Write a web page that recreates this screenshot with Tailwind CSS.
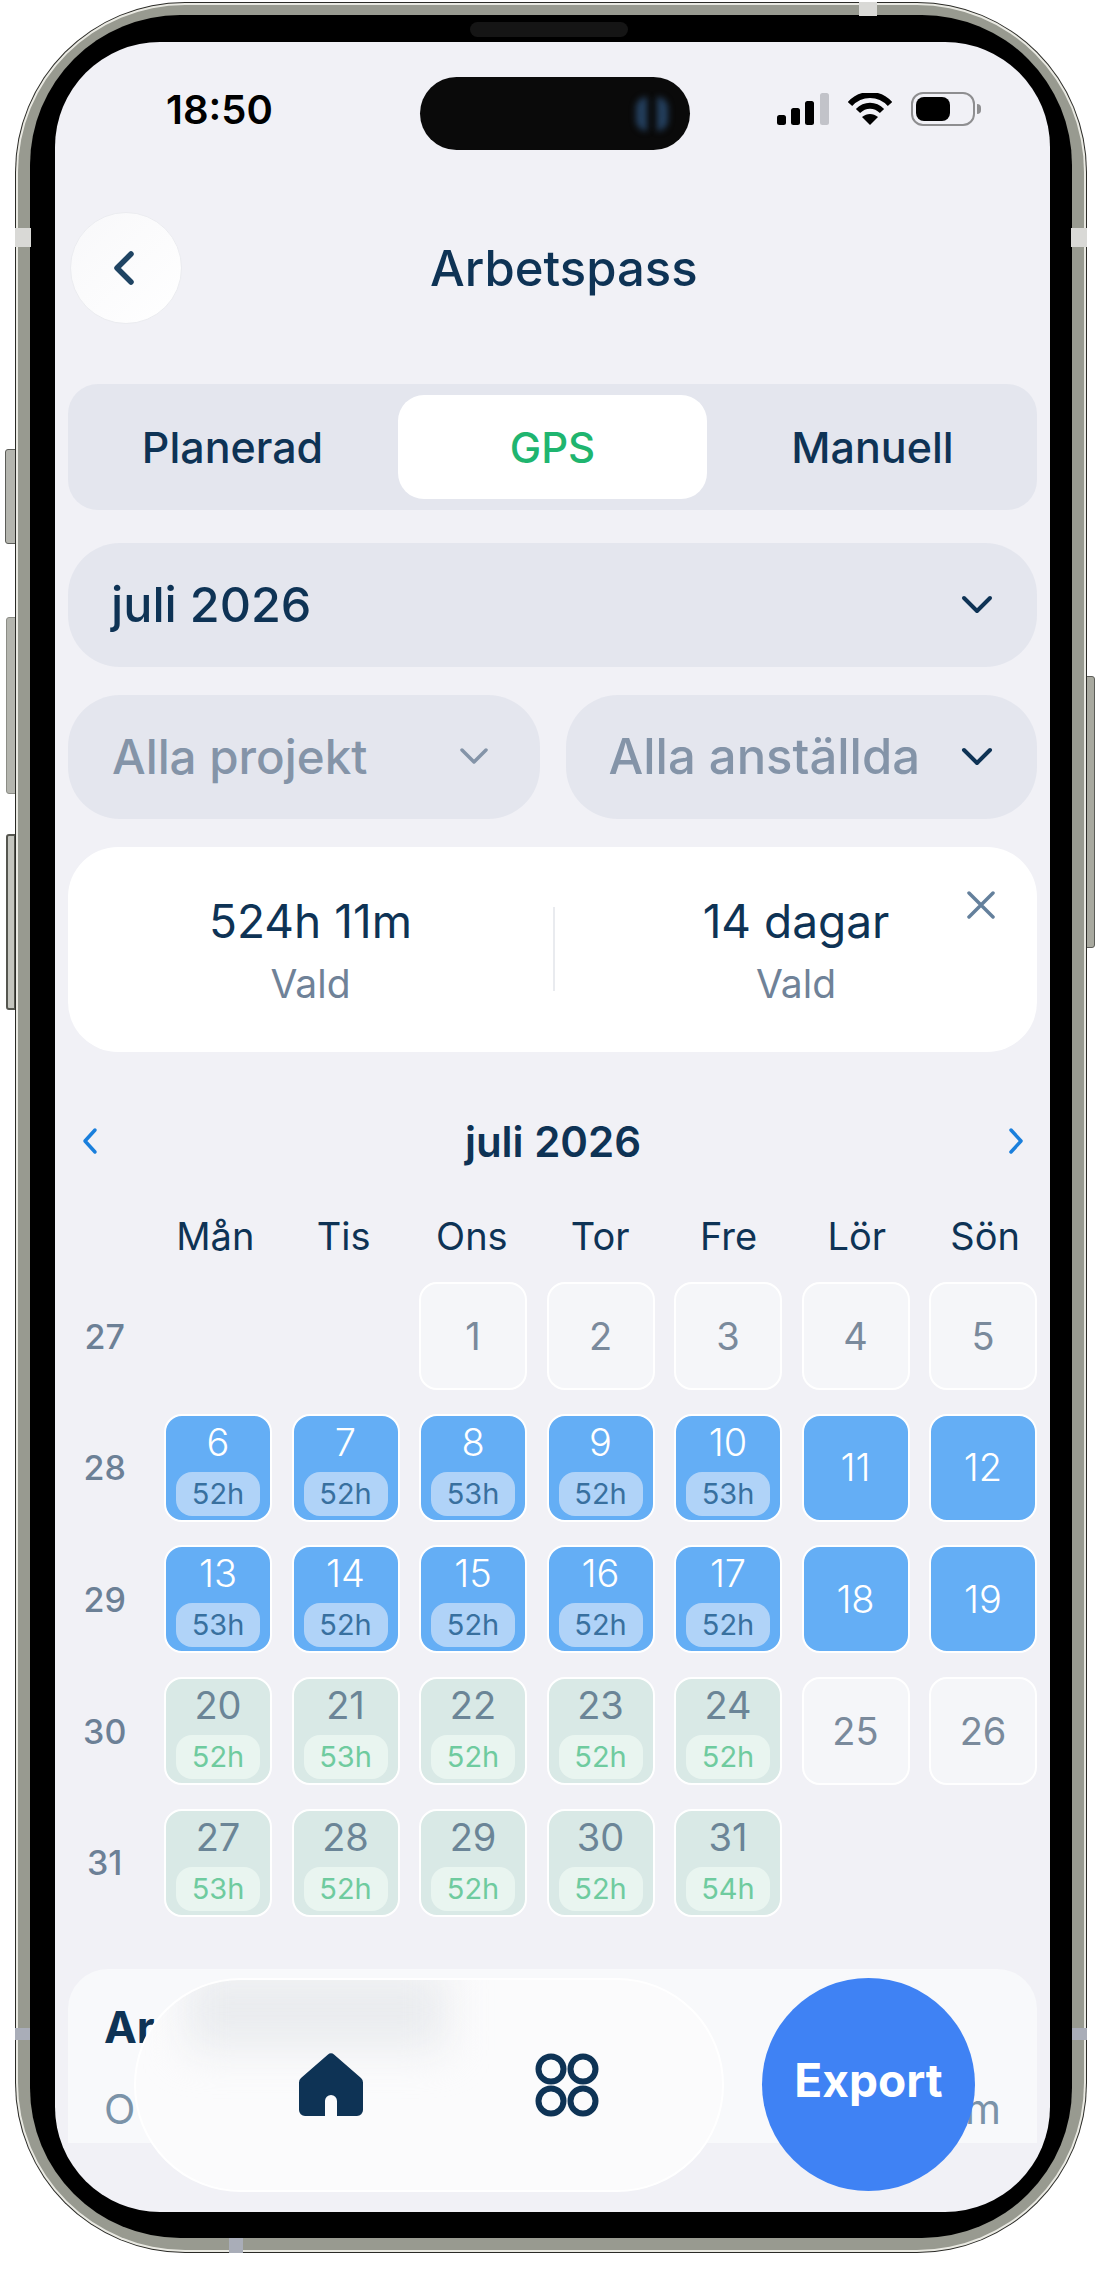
<!DOCTYPE html>
<html lang="sv">
<head>
    <meta charset="UTF-8">
    <title>Arbetspass</title>
    <script src="https://cdn.jsdelivr.net/npm/@tailwindcss/browser@4"></script>
</head>
<body class="bg-white">
    <div class="w-[1103px] h-[2269px] pt-[2px] pl-[15px] relative overflow-hidden font-['Inter',sans-serif]">
        <!-- side buttons -->
        <div class="absolute left-[5px] top-[449px] w-[11px] h-[95px] rounded-l-[3px] bg-[#b4b5ae] border border-[#5c5d58]"></div>
        <div class="absolute left-[6px] top-[617px] w-[10px] h-[177px] rounded-l-[3px] bg-[#b4b5ae] border border-[#8c8d86]"></div>
        <div class="absolute left-[6px] top-[834px] w-[10px] h-[176px] rounded-l-[3px] bg-[#c4c5be] border-2 border-[#55564f]"></div>
        <div class="absolute left-[1086px] top-[676px] w-[9px] h-[272px] rounded-r-[3px] bg-[#a8a99f] border border-[#5c5d58]"></div>

        <!-- phone frame -->
        <div class="w-[1072px] h-[2251px] rounded-[170px] bg-[#2b2b27] p-px relative">
            <div class="size-full rounded-[169px] bg-[#e9e9e2] p-[2px]">
                <div class="size-full rounded-[167px] bg-[#989a90] pt-[10px] px-[12px] pb-[12px]">
                    <div class="size-full rounded-[150px] bg-black pt-[27px] px-[25px] pb-[26px] relative">
                        <div class="absolute left-[440px] top-[7px] w-[158px] h-[15px] rounded-full bg-[#151515]"></div>

                        <!-- screen -->
                        <div class="w-[995px] h-[2170px] rounded-[105px] bg-[#f1f1f6] overflow-hidden relative">
                            <!-- status bar -->
                            <div class="h-[171px] relative">
                                <div class="absolute left-[111px] top-[41px] text-[40px] leading-[54px] font-semibold text-black">18:50</div>
                                <div class="absolute left-[365px] top-[35px] w-[270px] h-[73px] rounded-full bg-[#0a0a0a]">
                                    <div class="absolute left-[216px] top-[20px] w-[11px] h-[34px] rounded-l-full bg-[#24405f] blur-[3px]"></div>
                                    <div class="absolute left-[237px] top-[20px] w-[11px] h-[34px] rounded-r-full bg-[#24405f] blur-[3px]"></div>
                                </div>
                                <svg class="absolute left-[722px] top-[51px]" width="52" height="32" viewBox="0 0 52 32">
                                    <rect x="0" y="22" width="9" height="10" rx="2.5" fill="#000"/>
                                    <rect x="14" y="15" width="9" height="17" rx="2.5" fill="#000"/>
                                    <rect x="28" y="8" width="9" height="24" rx="2.5" fill="#000"/>
                                    <rect x="43" y="0" width="9" height="32" rx="2.5" fill="#c2c3c9"/>
                                </svg>
                                <svg class="absolute left-[793px] top-[51px]" width="44" height="32" viewBox="0 0 44 32">
                                    <path d="M2 11C13-1 31-1 42 11" fill="none" stroke="#000" stroke-width="6"/>
                                    <path d="M10 18c7-7 17-7 24 0" fill="none" stroke="#000" stroke-width="6"/>
                                    <path d="M22 32l-8-8c5-4 11-4 16 0z" fill="#000"/>
                                </svg>
                                <div class="absolute left-[856px] top-[50px] w-[64px] h-[34px] rounded-[12px] border-2 border-[#8e8e90] p-[3px]">
                                    <div class="w-[34px] h-full rounded-[8px] bg-black"></div>
                                </div>
                                <div class="absolute left-[922px] top-[62px] w-[4px] h-[10px] rounded-r-full bg-[#8e8e90]"></div>
                            </div>

                            <!-- header -->
                            <div class="h-[110px] pl-[15px] flex items-center relative">
                                <div class="size-[112px] shrink-0 rounded-full bg-gradient-to-br from-[#f8f8fa] to-white border border-[#ebecf0] pr-[5px] flex items-center justify-center">
                                    <svg width="22" height="34" viewBox="0 0 22 34" fill="none">
                                        <path d="M18 3L4 17l14 14" stroke="#1f4463" stroke-width="5.5" stroke-linecap="round" stroke-linejoin="round"/>
                                    </svg>
                                </div>
                                <h1 class="absolute left-[375px] top-[28px] text-[49px] leading-[56px] font-medium text-[#0e3355]">Arbetspass</h1>
                            </div>

                            <div class="mx-[13px] mt-[61px] flex flex-col">
                                <!-- tabs -->
                                <div class="h-[126px] rounded-[30px] bg-[#e4e6ee] p-[11px] flex items-center text-[43px] font-medium">
                                    <div class="w-[319px] pr-[12px] text-center text-[#0e3355]">Planerad</div>
                                    <div class="w-[309px] h-[104px] rounded-[26px] bg-white flex items-center justify-center text-[42px] text-[#1fb56f]">GPS</div>
                                    <div class="flex-1 pl-[12px] text-center text-[#0e3355]">Manuell</div>
                                </div>

                                <!-- month -->
                                <div class="mt-[33px] h-[124px] rounded-[52px] bg-[#e4e6ee] pl-[43px] pr-[44px] flex items-center justify-between">
                                    <span class="text-[48.500px] font-medium text-[#0e3355]">juli 2026</span>
                                    <svg width="32" height="20" viewBox="0 0 32 20" fill="none"><path d="M3 3l13 13L29 3" stroke="#0e3355" stroke-width="4" stroke-linecap="round" stroke-linejoin="round"/></svg>
                                </div>

                                <!-- filters -->
                                <div class="mt-[28px] grid grid-cols-2 gap-[26px]">
                                    <div class="h-[124px] rounded-[52px] bg-[#e4e6ee] pl-[44px] pr-[50px] flex items-center justify-between">
                                        <span class="text-[47.5px] font-medium text-[#8494a8]">Alla projekt</span>
                                        <svg width="32" height="20" viewBox="0 0 32 20" fill="none"><path d="M4 3l12 12L28 3" stroke="#8494a8" stroke-width="3.5" stroke-linecap="round" stroke-linejoin="round"/></svg>
                                    </div>
                                    <div class="h-[124px] rounded-[52px] bg-[#e4e6ee] pl-[43px] pr-[44px] flex items-center justify-between">
                                        <span class="text-[49px] font-medium text-[#8494a8]">Alla anställda</span>
                                        <svg width="32" height="20" viewBox="0 0 32 20" fill="none"><path d="M3 3l13 13L29 3" stroke="#0e3355" stroke-width="4" stroke-linecap="round" stroke-linejoin="round"/></svg>
                                    </div>
                                </div>

                                <!-- summary -->
                                <div class="mt-[28px] h-[205px] rounded-[50px] bg-white relative flex">
                                    <div class="w-[485px] pt-[46px] flex flex-col items-center">
                                        <span class="text-[46px] leading-[56px] text-[#0e3355]">524h 11m</span>
                                        <span class="mt-[12px] text-[39px] leading-[46px] text-[#6f8298]">Vald</span>
                                    </div>
                                    <div class="w-[2px] h-[84px] mt-[60px] bg-[#e9ebef]"></div>
                                    <div class="flex-1 pt-[46px] flex flex-col items-center">
                                        <span class="text-[46px] leading-[56px] text-[#0e3355]">14 dagar</span>
                                        <span class="mt-[12px] text-[39px] leading-[46px] text-[#6f8298]">Vald</span>
                                    </div>
                                    <svg class="absolute right-[42px] top-[44px]" width="28" height="28" viewBox="0 0 28 28" fill="none"><path d="M2 2l24 24M26 2L2 26" stroke="#64809c" stroke-width="3.5" stroke-linecap="round"/></svg>
                                </div>

                                <!-- calendar header -->
                                <div class="mt-[59px] h-[60px] flex items-center justify-between pl-[14px] pr-[13px]">
                                    <svg width="16" height="28" viewBox="0 0 16 28" fill="none"><path d="M13 3L3 14l10 11" stroke="#1a7fdc" stroke-width="3.5" stroke-linecap="round" stroke-linejoin="round"/></svg>
                                    <span class="text-[42px] font-semibold text-[#0e3355]">juli 2026</span>
                                    <svg width="16" height="28" viewBox="0 0 16 28" fill="none"><path d="M3 3l10 11L3 25" stroke="#1a7fdc" stroke-width="3.5" stroke-linecap="round" stroke-linejoin="round"/></svg>
                                </div>

                                <!-- calendar grid -->
                                <div class="mt-[42px] grid grid-cols-[73px_repeat(7,108px)] gap-x-[20.3px] text-center text-[38px] leading-[46px] text-[#0e3355]">
                                    <div></div><div>Mån</div><div>Tis</div><div>Ons</div><div>Tor</div><div>Fre</div><div>Lör</div><div>Sön</div>
                                </div>
                                <div class="mt-[23px] grid grid-cols-[76.5px_repeat(7,108px)] gap-x-[19.5px] gap-y-[23.7px] text-center">
                                    <div class="pr-[3px] flex items-center justify-center text-[34px] font-medium text-[#6c8096]">27</div>
                                    <div></div><div></div>
                                    <div class="h-[108px] rounded-[18px] border-2 border-white bg-[#f5f6f9] flex items-center justify-center text-[38px] text-[#7a8a9c]">1</div>
                                    <div class="h-[108px] rounded-[18px] border-2 border-white bg-[#f5f6f9] flex items-center justify-center text-[38px] text-[#7a8a9c]">2</div>
                                    <div class="h-[108px] rounded-[18px] border-2 border-white bg-[#f5f6f9] flex items-center justify-center text-[38px] text-[#7a8a9c]">3</div>
                                    <div class="h-[108px] rounded-[18px] border-2 border-white bg-[#f5f6f9] flex items-center justify-center text-[38px] text-[#7a8a9c]">4</div>
                                    <div class="h-[108px] rounded-[18px] border-2 border-white bg-[#f5f6f9] flex items-center justify-center text-[38px] text-[#7a8a9c]">5</div>

                                    <div class="pr-[3px] flex items-center justify-center text-[34px] font-medium text-[#6c8096]">28</div>
                                    <div class="h-[108px] rounded-[18px] border-2 border-white bg-[#64aef5] pt-[4px] flex flex-col items-center text-[38px] leading-[44px] font-light text-white">6<span class="mt-[8px] w-[84px] h-[44px] rounded-[16px] bg-[#b0d3f8] text-[29px] leading-[44px] font-normal text-[#38709f]">52h</span></div>
                                    <div class="h-[108px] rounded-[18px] border-2 border-white bg-[#64aef5] pt-[4px] flex flex-col items-center text-[38px] leading-[44px] font-light text-white">7<span class="mt-[8px] w-[84px] h-[44px] rounded-[16px] bg-[#b0d3f8] text-[29px] leading-[44px] font-normal text-[#38709f]">52h</span></div>
                                    <div class="h-[108px] rounded-[18px] border-2 border-white bg-[#64aef5] pt-[4px] flex flex-col items-center text-[38px] leading-[44px] font-light text-white">8<span class="mt-[8px] w-[84px] h-[44px] rounded-[16px] bg-[#b0d3f8] text-[29px] leading-[44px] font-normal text-[#38709f]">53h</span></div>
                                    <div class="h-[108px] rounded-[18px] border-2 border-white bg-[#64aef5] pt-[4px] flex flex-col items-center text-[38px] leading-[44px] font-light text-white">9<span class="mt-[8px] w-[84px] h-[44px] rounded-[16px] bg-[#b0d3f8] text-[29px] leading-[44px] font-normal text-[#38709f]">52h</span></div>
                                    <div class="h-[108px] rounded-[18px] border-2 border-white bg-[#64aef5] pt-[4px] flex flex-col items-center text-[38px] leading-[44px] font-light text-white">10<span class="mt-[8px] w-[84px] h-[44px] rounded-[16px] bg-[#b0d3f8] text-[29px] leading-[44px] font-normal text-[#38709f]">53h</span></div>
                                    <div class="h-[108px] rounded-[18px] border-2 border-white bg-[#64aef5] flex items-center justify-center text-[38px] font-light text-white">11</div>
                                    <div class="h-[108px] rounded-[18px] border-2 border-white bg-[#64aef5] flex items-center justify-center text-[38px] font-light text-white">12</div>

                                    <div class="pr-[3px] flex items-center justify-center text-[34px] font-medium text-[#6c8096]">29</div>
                                    <div class="h-[108px] rounded-[18px] border-2 border-white bg-[#64aef5] pt-[4px] flex flex-col items-center text-[38px] leading-[44px] font-light text-white">13<span class="mt-[8px] w-[84px] h-[44px] rounded-[16px] bg-[#b0d3f8] text-[29px] leading-[44px] font-normal text-[#38709f]">53h</span></div>
                                    <div class="h-[108px] rounded-[18px] border-2 border-white bg-[#64aef5] pt-[4px] flex flex-col items-center text-[38px] leading-[44px] font-light text-white">14<span class="mt-[8px] w-[84px] h-[44px] rounded-[16px] bg-[#b0d3f8] text-[29px] leading-[44px] font-normal text-[#38709f]">52h</span></div>
                                    <div class="h-[108px] rounded-[18px] border-2 border-white bg-[#64aef5] pt-[4px] flex flex-col items-center text-[38px] leading-[44px] font-light text-white">15<span class="mt-[8px] w-[84px] h-[44px] rounded-[16px] bg-[#b0d3f8] text-[29px] leading-[44px] font-normal text-[#38709f]">52h</span></div>
                                    <div class="h-[108px] rounded-[18px] border-2 border-white bg-[#64aef5] pt-[4px] flex flex-col items-center text-[38px] leading-[44px] font-light text-white">16<span class="mt-[8px] w-[84px] h-[44px] rounded-[16px] bg-[#b0d3f8] text-[29px] leading-[44px] font-normal text-[#38709f]">52h</span></div>
                                    <div class="h-[108px] rounded-[18px] border-2 border-white bg-[#64aef5] pt-[4px] flex flex-col items-center text-[38px] leading-[44px] font-light text-white">17<span class="mt-[8px] w-[84px] h-[44px] rounded-[16px] bg-[#b0d3f8] text-[29px] leading-[44px] font-normal text-[#38709f]">52h</span></div>
                                    <div class="h-[108px] rounded-[18px] border-2 border-white bg-[#64aef5] flex items-center justify-center text-[38px] font-light text-white">18</div>
                                    <div class="h-[108px] rounded-[18px] border-2 border-white bg-[#64aef5] flex items-center justify-center text-[38px] font-light text-white">19</div>

                                    <div class="pr-[3px] flex items-center justify-center text-[34px] font-medium text-[#6c8096]">30</div>
                                    <div class="h-[108px] rounded-[18px] border-2 border-white bg-[#d9e9e6] pt-[4px] flex flex-col items-center text-[38px] leading-[44px] text-[#6b8597]">20<span class="mt-[8px] w-[84px] h-[44px] rounded-[16px] bg-[#e9f5f0] text-[29px] leading-[44px] text-[#6fcb9f]">52h</span></div>
                                    <div class="h-[108px] rounded-[18px] border-2 border-white bg-[#d9e9e6] pt-[4px] flex flex-col items-center text-[38px] leading-[44px] text-[#6b8597]">21<span class="mt-[8px] w-[84px] h-[44px] rounded-[16px] bg-[#e9f5f0] text-[29px] leading-[44px] text-[#6fcb9f]">53h</span></div>
                                    <div class="h-[108px] rounded-[18px] border-2 border-white bg-[#d9e9e6] pt-[4px] flex flex-col items-center text-[38px] leading-[44px] text-[#6b8597]">22<span class="mt-[8px] w-[84px] h-[44px] rounded-[16px] bg-[#e9f5f0] text-[29px] leading-[44px] text-[#6fcb9f]">52h</span></div>
                                    <div class="h-[108px] rounded-[18px] border-2 border-white bg-[#d9e9e6] pt-[4px] flex flex-col items-center text-[38px] leading-[44px] text-[#6b8597]">23<span class="mt-[8px] w-[84px] h-[44px] rounded-[16px] bg-[#e9f5f0] text-[29px] leading-[44px] text-[#6fcb9f]">52h</span></div>
                                    <div class="h-[108px] rounded-[18px] border-2 border-white bg-[#d9e9e6] pt-[4px] flex flex-col items-center text-[38px] leading-[44px] text-[#6b8597]">24<span class="mt-[8px] w-[84px] h-[44px] rounded-[16px] bg-[#e9f5f0] text-[29px] leading-[44px] text-[#6fcb9f]">52h</span></div>
                                    <div class="h-[108px] rounded-[18px] border-2 border-white bg-[#f5f6f9] flex items-center justify-center text-[38px] text-[#7a8a9c]">25</div>
                                    <div class="h-[108px] rounded-[18px] border-2 border-white bg-[#f5f6f9] flex items-center justify-center text-[38px] text-[#7a8a9c]">26</div>

                                    <div class="pr-[3px] flex items-center justify-center text-[34px] font-medium text-[#6c8096]">31</div>
                                    <div class="h-[108px] rounded-[18px] border-2 border-white bg-[#d9e9e6] pt-[4px] flex flex-col items-center text-[38px] leading-[44px] text-[#6b8597]">27<span class="mt-[8px] w-[84px] h-[44px] rounded-[16px] bg-[#e9f5f0] text-[29px] leading-[44px] text-[#6fcb9f]">53h</span></div>
                                    <div class="h-[108px] rounded-[18px] border-2 border-white bg-[#d9e9e6] pt-[4px] flex flex-col items-center text-[38px] leading-[44px] text-[#6b8597]">28<span class="mt-[8px] w-[84px] h-[44px] rounded-[16px] bg-[#e9f5f0] text-[29px] leading-[44px] text-[#6fcb9f]">52h</span></div>
                                    <div class="h-[108px] rounded-[18px] border-2 border-white bg-[#d9e9e6] pt-[4px] flex flex-col items-center text-[38px] leading-[44px] text-[#6b8597]">29<span class="mt-[8px] w-[84px] h-[44px] rounded-[16px] bg-[#e9f5f0] text-[29px] leading-[44px] text-[#6fcb9f]">52h</span></div>
                                    <div class="h-[108px] rounded-[18px] border-2 border-white bg-[#d9e9e6] pt-[4px] flex flex-col items-center text-[38px] leading-[44px] text-[#6b8597]">30<span class="mt-[8px] w-[84px] h-[44px] rounded-[16px] bg-[#e9f5f0] text-[29px] leading-[44px] text-[#6fcb9f]">52h</span></div>
                                    <div class="h-[108px] rounded-[18px] border-2 border-white bg-[#d9e9e6] pt-[4px] flex flex-col items-center text-[38px] leading-[44px] text-[#6b8597]">31<span class="mt-[8px] w-[84px] h-[44px] rounded-[16px] bg-[#e9f5f0] text-[29px] leading-[44px] text-[#6fcb9f]">54h</span></div>
                                </div>

                                <!-- card under the nav, cut off by the scroll area -->
                                <div class="mt-[52px] h-[174px] rounded-t-[40px] bg-[#f8f9fb] px-[36px] pt-[33px] overflow-hidden">
                                    <div class="text-[44px] leading-[50px] font-bold text-[#0e3355]">Ar</div>
                                    <div class="mt-[32px] flex justify-between text-[41px] leading-[50px] text-[#7b93a8]"><span>O</span><span>m</span></div>
                                </div>
                            </div>

                            <!-- floating nav -->
                            <div class="absolute left-[79px] top-[1936px] w-[590px] h-[214px] rounded-[107px] bg-[#fbfbfc] border-2 border-white overflow-hidden flex items-center">
                                <div class="absolute left-[50px] top-[-10px] w-[260px] h-[80px] bg-[#eaecef] blur-[20px]"></div>
                                <svg class="relative ml-[163px] blur-[0.4px]" width="64" height="64" viewBox="0 0 64 64" fill="#0e3355">
                                    <path d="M29 1.5a4 4 0 0 1 6 0L62 25a6 6 0 0 1 2 4.500V57a6 6 0 0 1-6 6H38V48a6 6 0 0 0-12 0V63H6a6 6 0 0 1-6-6V29.500A6 6 0 0 1 2 25Z"/>
                                </svg>
                                <svg class="relative ml-[172px] blur-[0.4px]" width="64" height="64" viewBox="0 0 64 64" fill="none" stroke="#0e3355" stroke-width="6">
                                    <circle cx="16" cy="16" r="12.5"/><circle cx="48" cy="16" r="12.5"/>
                                    <circle cx="16" cy="48" r="12.5"/><circle cx="48" cy="48" r="12.5"/>
                                </svg>
                            </div>
                            <div class="absolute left-[707px] top-[1936px] size-[213px] rounded-full bg-[#3f82f4] pb-[8px] flex items-center justify-center text-[46px] font-bold text-white">Export</div>
                        </div>
                    </div>
                </div>
            </div>

            <!-- antenna bands -->
            <div class="absolute left-0 top-[226px] w-[16px] h-[19px] bg-[#d9d9d6]"></div>
            <div class="absolute right-0 top-[226px] w-[16px] h-[19px] bg-[#d9d9d6]"></div>
            <div class="absolute left-[844px] top-0 w-[18px] h-[14px] bg-[#d9d9d6]"></div>
            <div class="absolute left-[214px] bottom-0 w-[14px] h-[15px] bg-[#a9adb8]"></div>
            <div class="absolute left-0 top-[2026px] w-[15px] h-[12px] bg-[#a9adb8]"></div>
            <div class="absolute right-0 top-[2026px] w-[15px] h-[12px] bg-[#a9adb8]"></div>
        </div>
    </div>
</body>
</html>
